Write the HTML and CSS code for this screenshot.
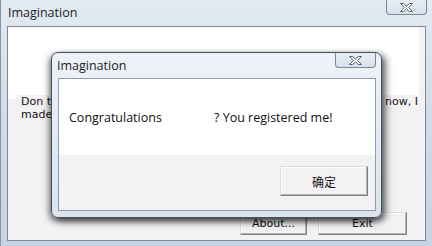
FILE: index.html
```html
<!DOCTYPE html>
<html lang="en">
<head>
<meta charset="UTF-8">
<meta name="viewport" content="width=device-width, initial-scale=1.0">
<title>Imagination</title>
<link rel="stylesheet" href="styles.css">
</head>
<body>

<div class="window">
  <div class="titlebar">
    <span class="title">Imagination</span>
    <span class="close">
      <svg width="15" height="11" viewBox="0 0 15 11"><path d="M1.5 1.5 H4.5 L7.5 4 L10.5 1.5 H13.5 L9.5 5.5 L13.5 9.5 H10.5 L7.5 7 L4.5 9.5 H1.5 L5.5 5.5 Z" fill="#fff" stroke="#5b6370" stroke-width="1" stroke-linejoin="round"/></svg>
    </span>
  </div>
  <div class="client">
    <div class="panel"></div>
    <div class="label">
      <div class="label-line"><span>Don t</span><span>now, I</span></div>
      <div class="label-line"><span>made</span></div>
    </div>
    <div class="buttons">
      <button class="btn btn-about">About...</button>
      <button class="btn btn-exit">Exit</button>
    </div>
  </div>

  <!-- message box on top of the main window -->
  <div class="dialog">
    <div class="titlebar dialog-bar">
      <span class="title">Imagination</span>
      <span class="close">
        <svg width="15" height="11" viewBox="0 0 15 11"><path d="M1.5 1.5 H4.5 L7.5 4 L10.5 1.5 H13.5 L9.5 5.5 L13.5 9.5 H10.5 L7.5 7 L4.5 9.5 H1.5 L5.5 5.5 Z" fill="#fff" stroke="#5b6370" stroke-width="1" stroke-linejoin="round"/></svg>
      </span>
    </div>
    <div class="dialog-client">
      <div class="message">
        <span class="msg-a">Congratulations</span>
        <span class="msg-b">? You registered me!</span>
      </div>
      <div class="dialog-footer">
        <button class="btn btn-ok">确定</button>
      </div>
    </div>
  </div>
</div>

</body>
</html>
```

FILE: styles.css
```css
/* page */
body {
  margin: 0;
  background: #cfdae7;
  font-family: "DejaVu Sans", sans-serif;
}

/* main window frame */
.window {
  position: relative;
  width: 432px;
  height: 246px;
  box-sizing: border-box;
  border-left: 1px solid #8793a3;
  background: linear-gradient(to bottom, #e3eaf3 0%, #d3deea 40%, #c6d3e2 100%);
  display: flex;
  flex-direction: column;
}

.titlebar {
  height: 26px;
  display: flex;
  align-items: flex-start;
  justify-content: space-between;
}

.title {
  font-family: "Open Sans", sans-serif;
  font-size: 12.5px;
  color: #1c1c1c;
  padding: 4px 0 0 7px;
}

.close {
  width: 41px;
  height: 15px;
  margin-right: 5px;
  box-sizing: border-box;
  border: 1px solid #7b8696;
  border-top: none;
  border-radius: 0 0 4px 4px;
  background: linear-gradient(to bottom, #e8eef5, #d6e0eb);
  display: flex;
  align-items: center;
  justify-content: center;
}

/* main window client area */
.client {
  flex: 1;
  margin: 0 6px 5px 6px;
  border: 1px solid #7f8893;
  background: #f4f1f4;
  display: flex;
  flex-direction: column;
}

.panel {
  height: 72px;
  margin-right: 6px;
  background: #fff;
}

.label {
  margin: -4px 0 0 8px;
  padding-left: 5px;
  width: 397px;
  font-size: 11px;
  line-height: 13px;
  color: #111;
  background: #f4f1f4;
}

.label-line {
  display: flex;
  justify-content: space-between;
}

.buttons {
  margin-top: auto;
  display: flex;
  justify-content: flex-end;
  gap: 11px;
  padding: 0 18px 5px 0;
}

/* classic push button */
.btn {
  height: 23px;
  padding: 0;
  font-family: "DejaVu Sans", sans-serif;
  font-size: 11px;
  color: #111;
  background: #f4f1f4;
  border: 1px solid;
  border-color: #dcdcdc #808080 #808080 #dcdcdc;
  box-shadow: inset -1px -1px 0 #b4b4b4, inset 1px 1px 0 #fff;
}

.btn-about {
  width: 67px;
}

.btn-exit {
  width: 89px;
}

/* message box */
.dialog {
  position: absolute;
  left: 50px;
  top: 52px;
  width: 331px;
  height: 166px;
  box-sizing: border-box;
  border: 1px solid #46505c;
  border-radius: 7px;
  background: linear-gradient(to bottom, #eef2f8 0%, #e4eaf3 50%, #dbe3ee 100%);
  box-shadow: -2px 3px 6px rgba(0, 0, 0, 0.5), 4px 3px 7px rgba(0, 0, 0, 0.55);
  display: flex;
  flex-direction: column;
}

.dialog-bar {
  height: 25px;
}

.dialog-bar .title {
  padding-left: 5px;
}

.dialog-client {
  flex: 1;
  margin: 0 5px 6px 6px;
  border: 1px solid #8d9bb0;
  background: #f4f1f4;
  display: flex;
  flex-direction: column;
}

.message {
  height: 76px;
  background: #fff;
  font-family: "Open Sans", sans-serif;
  font-size: 12.5px;
  color: #111;
  display: flex;
  align-items: center;
  padding-left: 10px;
}

.msg-a {
  width: 145px;
}

.dialog-footer {
  display: flex;
  justify-content: flex-end;
  padding: 11px 7px 0 0;
}

.btn-ok {
  width: 88px;
  height: 30px;
  font-family: "Noto Sans CJK SC", sans-serif;
  font-size: 12px;
}
```
